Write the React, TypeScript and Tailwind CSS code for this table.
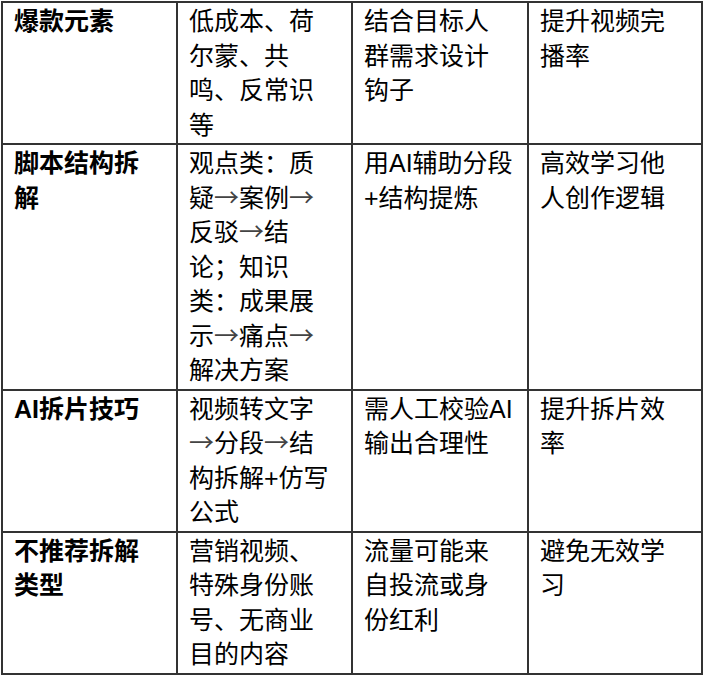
const rows: { head: string; cells: string[] }[] = [
  {
    head: "爆款元素",
    cells: ["低成本、荷尔蒙、共鸣、反常识等", "结合目标人群需求设计钩子", "提升视频完播率"],
  },
  {
    head: "脚本结构拆解",
    cells: [
      "观点类：质疑→案例→反驳→结论；知识类：成果展示→痛点→解决方案",
      "用AI辅助分段+结构提炼",
      "高效学习他人创作逻辑",
    ],
  },
  {
    head: "AI拆片技巧",
    cells: ["视频转文字→分段→结构拆解+仿写公式", "需人工校验AI输出合理性", "提升拆片效率"],
  },
  {
    head: "不推荐拆解类型",
    cells: ["营销视频、特殊身份账号、无商业目的内容", "流量可能来自投流或身份红利", "避免无效学习"],
  },
];

// arrows come out narrow in Liberation Sans, the CJK face has the wide one
function CellText({ text }: { text: string }) {
  const parts = text.split("→");
  return (
    <>
      {parts.map((p, i) => (
        <span key={i}>
          {p}
          {i < parts.length - 1 && (
            <span className="font-['Noto_Sans_CJK_SC'] leading-none text-[#444]">→</span>
          )}
        </span>
      ))}
    </>
  );
}

export default function App() {
  return (
    <div className="bg-white min-h-screen pl-px pt-px">
      <div
        className="grid grid-cols-[175px_175px_176px_174px] w-[702px] border-l-2 border-t-2 border-[#333] text-black text-[25px] leading-[34.5px]"
        style={{ fontFamily: '"Liberation Sans", "Noto Sans CJK SC", sans-serif' }}
      >
        {rows.map((row) => (
          <div key={row.head} className="contents">
            <div className="border-r-2 border-b-2 border-[#333] pl-[11px] py-px">
              <div className="w-[149px] font-bold">{row.head}</div>
            </div>
            {row.cells.map((cell, i) => (
              <div key={i} className="border-r-2 border-b-2 border-[#333] pl-[11px] py-px">
                <div className="w-[149px]">
                  <CellText text={cell} />
                </div>
              </div>
            ))}
          </div>
        ))}
      </div>
    </div>
  );
}
